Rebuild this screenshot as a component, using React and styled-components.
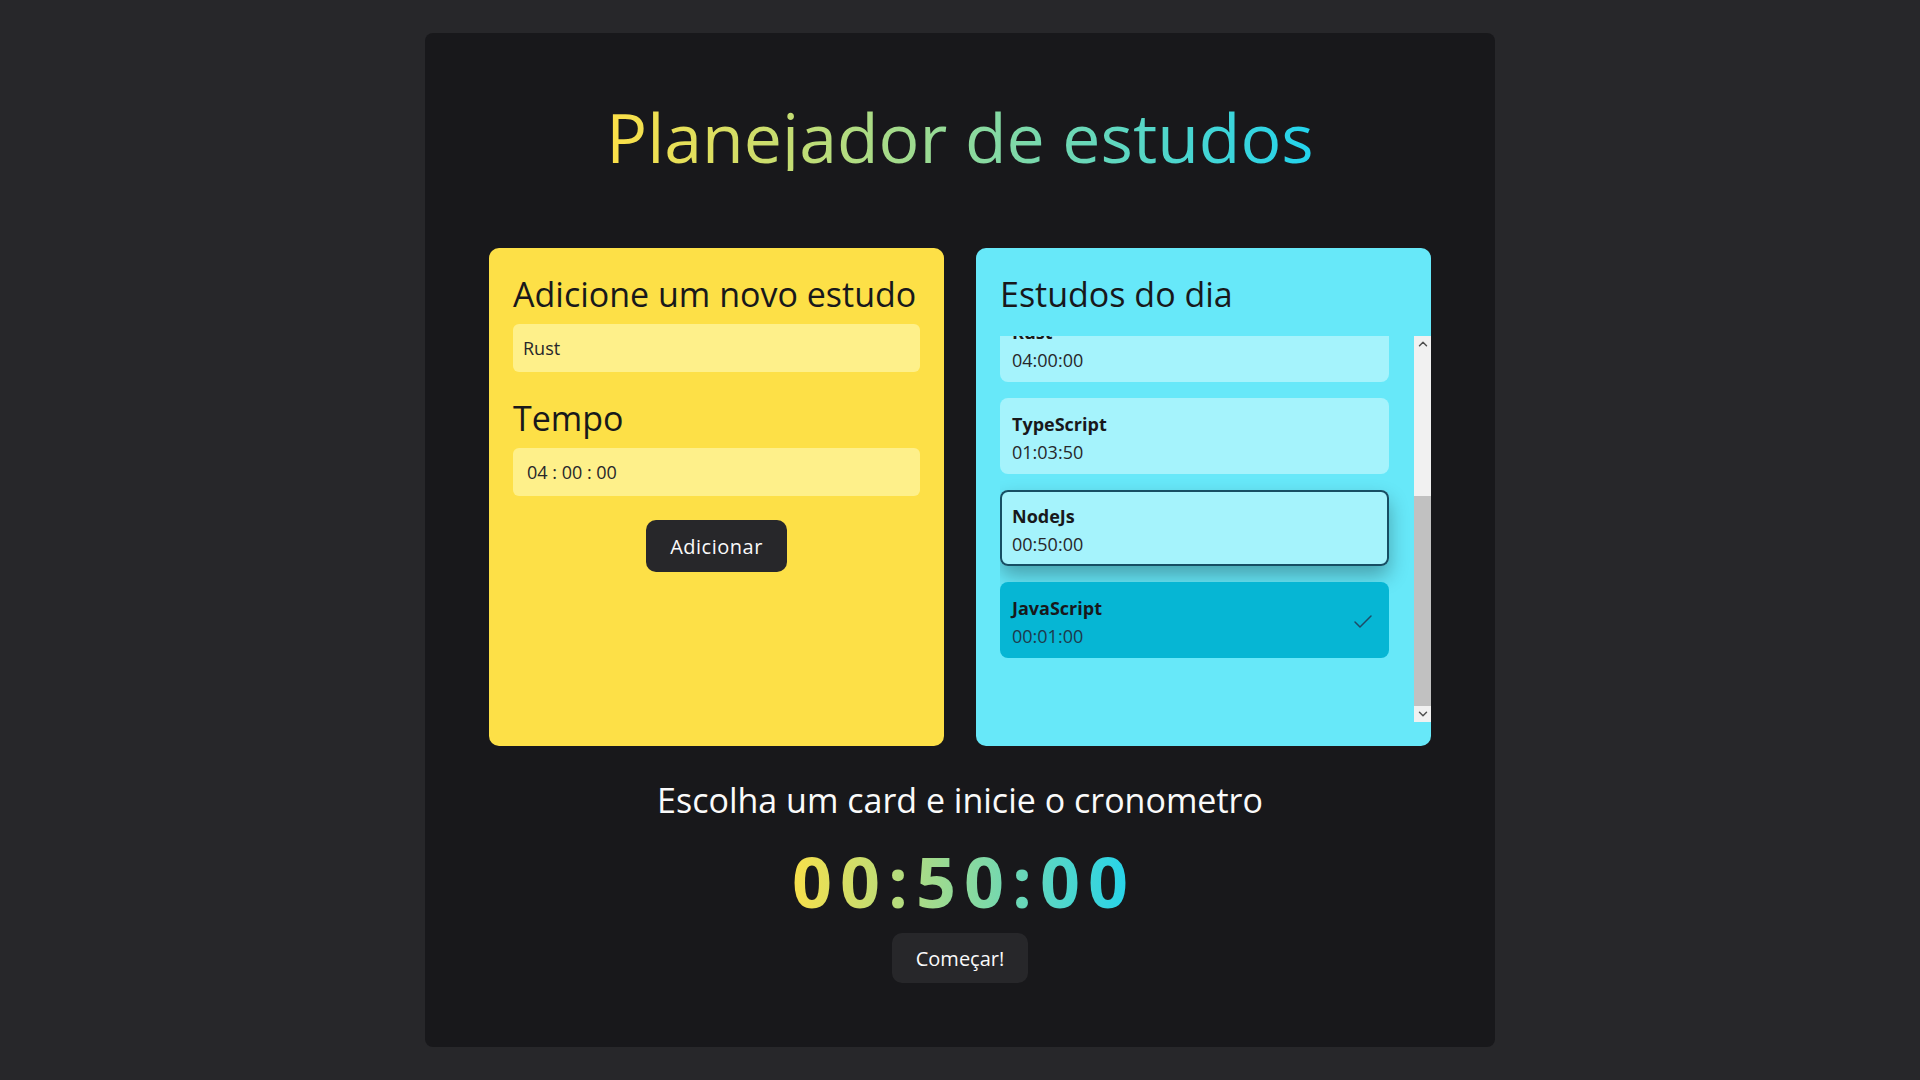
import React, { useLayoutEffect, useRef } from "react";
import styled, { createGlobalStyle } from "styled-components";
import { Check, ChevronDown, ChevronUp } from "lucide-react";

const GlobalStyle = createGlobalStyle`
  * {
    box-sizing: border-box;
  }
  body {
    margin: 0;
    background-color: #27272a;
    font-family: "Open Sans", "Noto Sans", sans-serif;
    color: #18181b;
  }
`;

const Page = styled.div`
  min-height: 100vh;
  display: flex;
  align-items: center;
  justify-content: center;
`;

const Board = styled.main`
  width: 1070px;
  background-color: #18181b;
  border-radius: 8px;
  padding: 64px;
  display: flex;
  flex-direction: column;
  align-items: center;
`;

const GradientText = styled.h1`
  margin: 0;
  line-height: 1;
  background: linear-gradient(to right, #fde047, #22d3ee);
  -webkit-background-clip: text;
  background-clip: text;
  color: transparent;
`;

const Title = styled(GradientText)`
  margin: 6px 0 77px;
  font-size: 68px;
  font-weight: 400;
`;

const Cards = styled.section`
  width: 100%;
  height: 498px;
  display: grid;
  grid-template-columns: 1fr 1fr;
  gap: 32px;
`;

const Card = styled.div`
  display: flex;
  flex-direction: column;
  min-height: 0;
  background-color: ${(props) => props.$color};
  border-radius: 10px;
  padding: ${(props) => (props.$flush ? "24px 0 24px 24px" : "24px")};
`;

const CardTitle = styled.h2`
  margin: 0;
  font-size: 34px;
  line-height: 44px;
  font-weight: 400;
  color: #18181b;
`;

const FieldLabel = styled(CardTitle).attrs({ as: "label" })`
  display: block;
  margin-top: 24px;
`;

const Field = styled.input`
  margin-top: 8px;
  height: 48px;
  width: 100%;
  border: none;
  outline: none;
  border-radius: 6px;
  background-color: #fef08a;
  padding: 0 ${(props) => (props.$wide ? "14px" : "10px")};
  font-family: inherit;
  font-size: 18px;
  color: #27272a;
`;

const AddButton = styled.button`
  align-self: center;
  margin-top: 24px;
  height: 52px;
  padding: 0 24px;
  border: none;
  border-radius: 10px;
  background-color: #27272a;
  color: #fafafa;
  font-family: inherit;
  font-size: 20px;
  letter-spacing: 0.5px;
  cursor: pointer;
`;

const ListArea = styled.div`
  flex: 1;
  min-height: 0;
  margin-top: 20px;
  display: flex;
`;

const StudyList = styled.ul`
  flex: 1;
  min-height: 0;
  margin: 0;
  padding: 0 25px 64px 0;
  list-style: none;
  overflow-y: scroll;
  scrollbar-width: none;
  display: flex;
  flex-direction: column;
  gap: 16px;
`;

const Scrollbar = styled.div`
  width: 17px;
  display: flex;
  flex-direction: column;
  background-color: #f1f1f1;
`;

const ScrollArrow = styled.div`
  height: 16px;
  display: flex;
  align-items: center;
  justify-content: center;
  color: #505050;
`;

const ScrollTrack = styled.div`
  flex: 1;
`;

const ScrollThumb = styled.div`
  height: 210px;
  background-color: #c1c1c1;
`;

const StudyItem = styled.li`
  flex-shrink: 0;
  display: flex;
  align-items: center;
  justify-content: space-between;
  padding: 12px 14px 8px 12px;
  border-radius: 8px;
  background-color: ${(props) => (props.$done ? "#06b6d4" : "#a5f3fc")};
  box-shadow: ${(props) =>
    props.$active
      ? "inset 0 0 0 2px #164e63, 0 10px 20px rgba(0, 0, 0, 0.3)"
      : "none"};
  cursor: pointer;
`;

const ItemName = styled.strong`
  display: block;
  font-size: 18px;
  line-height: 28px;
  font-weight: 700;
  color: #18181b;
`;

const ItemTime = styled.span`
  display: block;
  font-size: 18px;
  line-height: 28px;
  color: ${(props) => (props.$done ? "#1e3a4c" : "#27272a")};
`;

const Prompt = styled.h2`
  margin: 34px 0 0;
  font-size: 34px;
  line-height: 40px;
  font-weight: 400;
  color: #fafafa;
`;

const Timer = styled(GradientText).attrs({ as: "p" })`
  margin-top: 26px;
  padding-left: 8px;
  font-size: 70px;
  font-weight: 700;
  letter-spacing: 8px;
`;

const StartButton = styled.button`
  margin-top: 17px;
  height: 50px;
  padding: 0 24px;
  border: none;
  border-radius: 10px;
  background-color: #27272a;
  color: #fafafa;
  font-family: inherit;
  font-size: 20px;
  cursor: pointer;
`;

const studies = [
  { name: "Rust", time: "04:00:00" },
  { name: "TypeScript", time: "01:03:50" },
  { name: "NodeJs", time: "00:50:00", active: true },
  { name: "JavaScript", time: "00:01:00", done: true },
];

const App = () => {
  const listRef = useRef(null);

  useLayoutEffect(() => {
    if (listRef.current) {
      listRef.current.scrollTop = listRef.current.scrollHeight;
    }
  }, []);

  return (
    <Page>
      <GlobalStyle />
      <Board>
        <Title>Planejador de estudos</Title>
        <Cards>
          <Card $color="#fde047">
            <CardTitle>Adicione um novo estudo</CardTitle>
            <Field type="text" defaultValue="Rust" />
            <FieldLabel>Tempo</FieldLabel>
            <Field type="text" $wide defaultValue="04 : 00 : 00" />
            <AddButton>Adicionar</AddButton>
          </Card>
          <Card $color="#67e8f9" $flush>
            <CardTitle>Estudos do dia</CardTitle>
            <ListArea>
              <StudyList ref={listRef}>
                {studies.map((study) => (
                  <StudyItem
                    key={study.name}
                    $active={study.active}
                    $done={study.done}
                  >
                    <div>
                      <ItemName>{study.name}</ItemName>
                      <ItemTime $done={study.done}>{study.time}</ItemTime>
                    </div>
                    {study.done && (
                      <Check size={24} strokeWidth={1.5} color="#1e4a66" />
                    )}
                  </StudyItem>
                ))}
              </StudyList>
              <Scrollbar>
                <ScrollArrow>
                  <ChevronUp size={14} strokeWidth={2.5} />
                </ScrollArrow>
                <ScrollTrack />
                <ScrollThumb />
                <ScrollArrow>
                  <ChevronDown size={14} strokeWidth={2.5} />
                </ScrollArrow>
              </Scrollbar>
            </ListArea>
          </Card>
        </Cards>
        <Prompt>Escolha um card e inicie o cronometro</Prompt>
        <Timer>00:50:00</Timer>
        <StartButton>Começar!</StartButton>
      </Board>
    </Page>
  );
};

export default App;
